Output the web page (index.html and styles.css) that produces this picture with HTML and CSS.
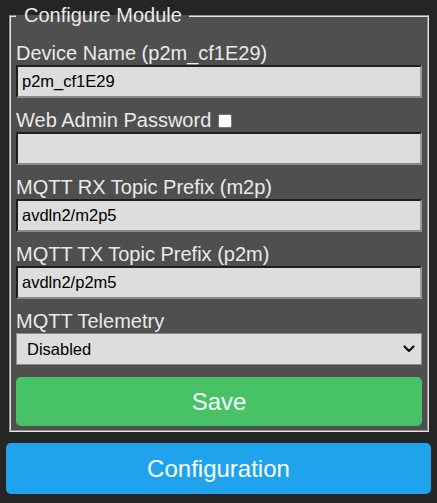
FILE: index.html
```html
<!DOCTYPE html>
<html lang="en">
<head>
<meta charset="utf-8">
<title>Configure Module</title>
<link rel="stylesheet" href="styles.css">
</head>
<body>
<div class="page">
  <fieldset class="panel">
    <legend class="title">Configure Module</legend>
    <form class="form">
      <div class="field">
        <label class="label">Device Name (p2m_cf1E29)</label>
        <input class="text-input" type="text" value="p2m_cf1E29">
      </div>
      <div class="field">
        <label class="label">Web Admin Password <input class="check" type="checkbox"></label>
        <input class="text-input" type="password" value="">
      </div>
      <div class="field">
        <label class="label">MQTT RX Topic Prefix (m2p)</label>
        <input class="text-input" type="text" value="avdln2/m2p5">
      </div>
      <div class="field">
        <label class="label">MQTT TX Topic Prefix (p2m)</label>
        <input class="text-input" type="text" value="avdln2/p2m5">
      </div>
      <div class="field">
        <label class="label">MQTT Telemetry</label>
        <div class="select-wrap">
          <select class="select">
            <option>Disabled</option>
            <option>Enabled</option>
          </select>
          <svg class="chevron" width="12" height="8" viewBox="0 0 12 8" aria-hidden="true">
            <path d="M1.5 1.5 L6 6 L10.5 1.5" fill="none" stroke="#111" stroke-width="2.2" stroke-linecap="round" stroke-linejoin="round"/>
          </svg>
        </div>
      </div>
      <button class="btn btn-green" type="button">Save</button>
    </form>
  </fieldset>
  <button class="btn btn-blue" type="button">Configuration</button>
</div>
</body>
</html>
```
FILE: styles.css
```css
html, body {
  margin: 0;
  padding: 0;
  background: #252525;
}

body {
  font-family: "Liberation Sans", Arial, sans-serif;
  color: #eaeaea;
}

.page {
  display: flex;
  flex-direction: column;
  padding: 4px 6px 8px 6px;
}

.panel {
  margin: 0 2px 0 3px;
  padding: 14px 5px 4px 5px;
  border: 2px groove #e6e6e6;
  background: #4f4f4f;
  min-width: 0;
}

.title {
  font-size: 20px;
  line-height: 23px;
  padding: 0 7px 0 8px;
  color: #eaeaea;
}

.form {
  display: flex;
  flex-direction: column;
  gap: 10px;
  margin: 0;
}

.field {
  display: flex;
  flex-direction: column;
}

.label {
  display: block;
  font-size: 20px;
  line-height: 24px;
  color: #eaeaea;
  white-space: nowrap;
}

.check {
  -webkit-appearance: none;
  appearance: none;
  box-sizing: border-box;
  width: 14px;
  height: 14px;
  margin: 0 0 0 1px;
  vertical-align: -1px;
  background: #ffffff;
  border: 1px solid #767676;
  border-radius: 2px;
}

.text-input {
  box-sizing: border-box;
  width: 100%;
  height: 33px;
  margin: 0;
  padding: 0 4px;
  font-family: "Liberation Sans", Arial, sans-serif;
  font-size: 16.5px;
  color: #000;
  background: #dddddd;
  border-style: solid;
  border-width: 2px;
  border-color: #1e1e1e #9a9a9a #8a8a8a #1e1e1e;
  outline: none;
}

.select-wrap {
  position: relative;
}

.select {
  box-sizing: border-box;
  display: block;
  width: 100%;
  height: 32px;
  margin: 0;
  padding: 0 30px 0 10px;
  font-family: "Liberation Sans", Arial, sans-serif;
  font-size: 16.5px;
  color: #000;
  background: #dddddd;
  border: 1px solid #8a8a8a;
  border-radius: 0;
  -webkit-appearance: none;
  appearance: none;
  outline: none;
}

.chevron {
  position: absolute;
  right: 7px;
  top: 12px;
  pointer-events: none;
}

.btn {
  display: block;
  width: 100%;
  border: 0;
  border-radius: 5px;
  color: #faffff;
  font-family: "Liberation Sans", Arial, sans-serif;
  font-size: 24px;
  padding: 0;
  cursor: pointer;
}

.btn-green {
  background: #47c266;
  height: 49px;
  margin-top: 2px;
}

.btn-blue {
  background: #1fa3ec;
  height: 51px;
  margin-top: 11px;
}
```
